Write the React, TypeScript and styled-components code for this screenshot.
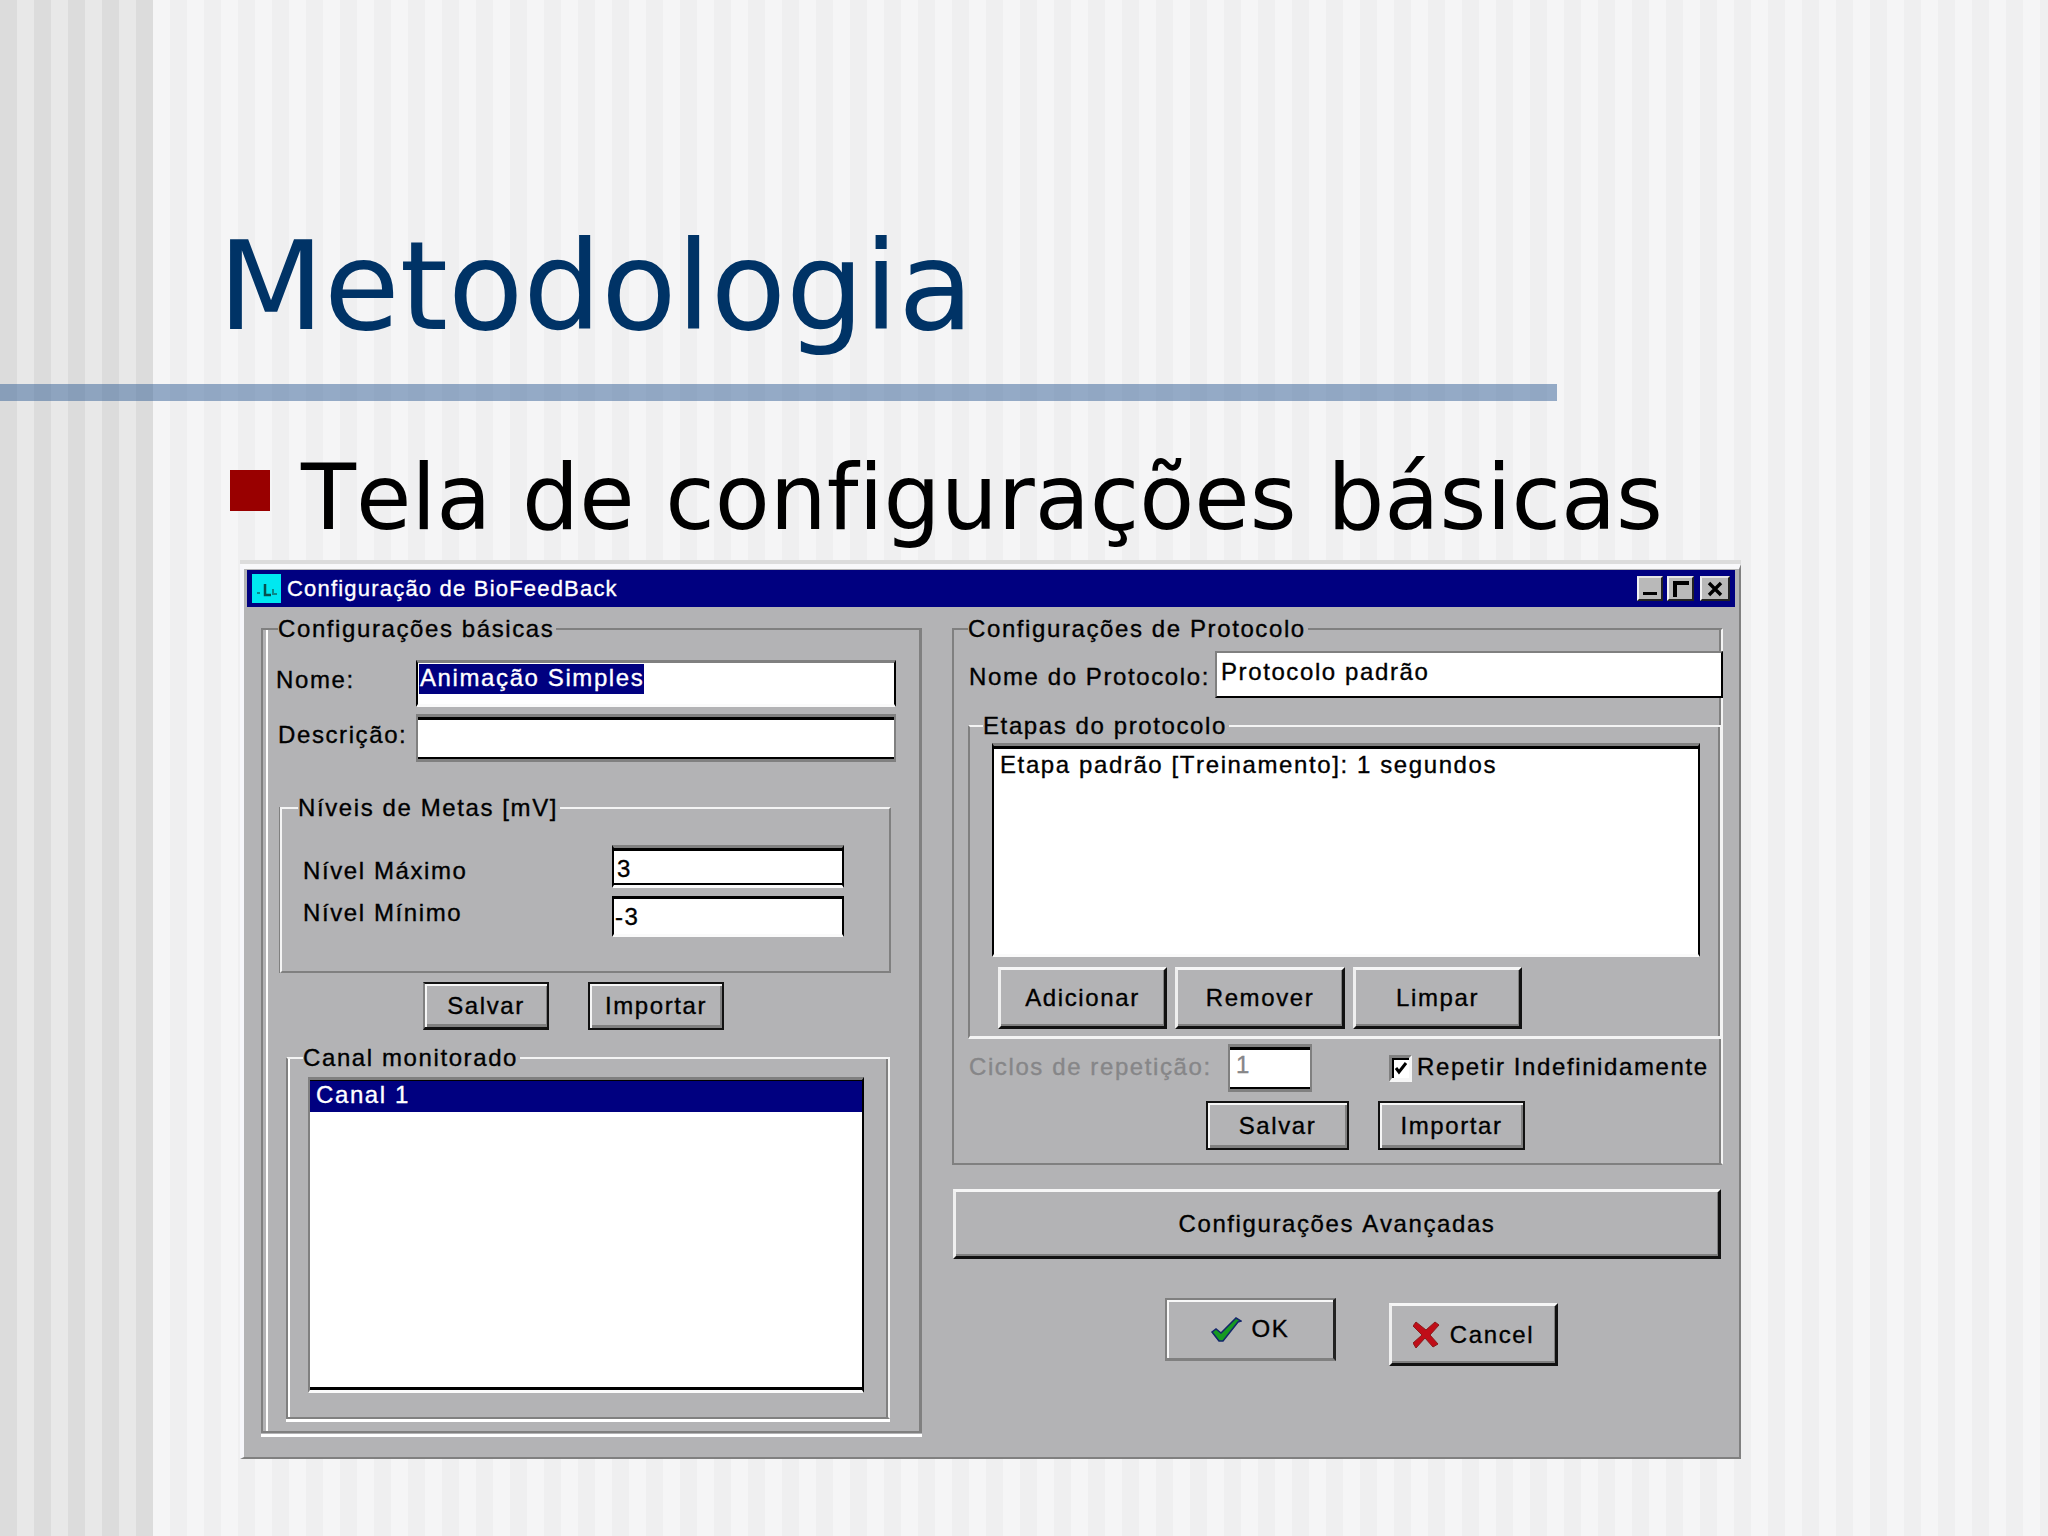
import React from 'react';
import styled, { createGlobalStyle, css } from 'styled-components';

const FACE = '#b3b3b5';
const SHADE = '#808080';
const NAVY = '#000080';

const GlobalStyle = createGlobalStyle`
    html, body {
        margin: 0;
        padding: 0;
    }
`;

const Page = styled.div`
    width: 2048px;
    height: 1536px;
    box-sizing: border-box;
    padding-top: 222px;
    overflow: hidden;
    font-family: 'DejaVu Sans', sans-serif;
    font-kerning: none;
    font-variant-ligatures: none;
    background-image:
        repeating-linear-gradient(90deg, #dcdcdc 0 17px, #e8e8e8 17px 34px),
        repeating-linear-gradient(90deg, #f5f5f6 0 17px, #efeff0 17px 34px);
    background-size: 153px 100%, 100% 100%;
    background-position: 0 0, 153px 0;
    background-repeat: no-repeat, no-repeat;
`;

const Title = styled.h1`
    margin: 0 0 0 218px;
    font-size: 123px;
    line-height: 130px;
    font-weight: 400;
    color: #003366;
`;

const Rule = styled.div`
    width: 1557px;
    height: 17px;
    margin-top: 32px;
    background: rgba(51, 95, 150, 0.5);
`;

const Heading = styled.div`
    display: flex;
    align-items: flex-start;
    gap: 31px;
    margin: 47px 0 0 230px;
    height: 100px;
`;

const Bullet = styled.span`
    flex: none;
    width: 40px;
    height: 41px;
    margin-top: 22px;
    background: #990000;
`;

const HeadingText = styled.div`
    font-size: 90px;
    line-height: 100px;
    word-spacing: 2px;
    color: #000;
`;

const Dialog = styled.div`
    width: 1501px;
    height: 895px;
    box-sizing: border-box;
    margin: 16px 0 0 240px;
    padding-top: 1px;
    border-top: 5px solid #f8f8fa;
    border-left: 4px solid #f6f6fa;
    border-right: 2px solid ${SHADE};
    border-bottom: 2px solid ${SHADE};
    box-shadow: 0 -4px #dcdcdc;
    background: ${FACE};
    color: #000;
    font-family: 'Liberation Sans', Arial, sans-serif;
    font-size: 24px;
    line-height: 28px;
    letter-spacing: 1.6px;
    -webkit-text-stroke: 0.35px currentColor;
`;

const TitleBar = styled.div`
    display: flex;
    align-items: center;
    height: 37px;
    margin: 0 4px 0 3px;
    padding: 0 5px;
    background: ${NAVY};
    color: #fff;
    font-size: 22px;
    letter-spacing: 1.2px;
`;

const TitleText = styled.span`
    flex: 1;
    margin-left: 6px;
`;

const AppIcon = styled.svg`
    width: 29px;
    height: 29px;
    flex: none;
`;

const WindowButton = styled.button<{ $width: number; $gap: number }>`
    display: flex;
    align-items: center;
    justify-content: center;
    width: ${(p) => p.$width}px;
    height: 25px;
    margin-left: ${(p) => p.$gap}px;
    padding: 0;
    box-sizing: border-box;
    border: 0;
    border-top: 2px solid #e4e4e4;
    border-left: 2px solid #f2f2f2;
    border-right: 2px solid #222;
    border-bottom: 2px solid #222;
    background: #b9b9b9;
`;

const Columns = styled.div`
    display: grid;
    grid-template-columns: 661px 771px;
    column-gap: 30px;
    padding: 8px 0 0 17px;
`;

const Column = styled.div`
    display: flex;
    flex-direction: column;
    align-items: flex-start;
`;

const Group = styled.fieldset`
    box-sizing: border-box;
    min-width: 0;
    margin: 0;
    padding: 0;
    border: 2px solid ${SHADE};
`;

const BasicGroup = styled(Group)`
    width: 661px;
    height: 818px;
    border-right-width: 3px;
    box-shadow: inset 3px 0 ${FACE}, inset 5px 0 #fff, 0 1px ${FACE}, 0 4px #fff;
`;

const GoalsGroup = styled(Group)`
    width: 611px;
    height: 179px;
    margin: 32px 0 0 17px;
    border-top-color: #f4f4f4;
    border-left-color: #f4f4f4;
    box-shadow: -1px 0 ${SHADE};
`;

const ChannelGroup = styled(Group)`
    width: 604px;
    height: 375px;
    margin: 14px 0 0 23px;
    border-top-color: #f4f4f4;
    border-right-color: #f4f4f4;
    box-shadow: inset 2px 0 #fff, inset -2px 0 ${SHADE}, 0 3px #fff;
`;

const ProtocolGroup = styled(Group)`
    width: 771px;
    height: 550px;
    border-right-color: #f4f4f4;
    box-shadow: inset -2px 0 ${SHADE};
`;

const StepsGroup = styled(Group)`
    width: 754px;
    height: 327px;
    margin: 14px 0 0 14px;
    border-top-color: #f4f4f4;
    border-bottom-color: #f4f4f4;
    border-bottom-width: 3px;
    border-right-color: #f4f4f4;
    box-shadow: inset -2px 0 ${SHADE};
`;

const Legend = styled.legend<{ $inset: number }>`
    height: 28px;
    margin-left: ${(p) => p.$inset}px;
    padding: 0 2px 0 0;
`;

const Row = styled.div<{ $columns: string; $top: number; $left: number }>`
    display: grid;
    grid-template-columns: ${(p) => p.$columns};
    align-items: start;
    margin-top: ${(p) => p.$top}px;
    padding-left: ${(p) => p.$left}px;
`;

const FieldLabel = styled.span<{ $top: number; $muted?: boolean }>`
    margin-top: ${(p) => p.$top}px;
    white-space: nowrap;
    color: ${(p) => (p.$muted ? '#868688' : 'inherit')};
`;

const wellEdges = {
    name: css`
        border-style: solid;
        border-width: 3px 2px;
        border-color: ${SHADE} #000 #fafafa #000;
    `,
    plain: css`
        border-style: solid;
        border-width: 3px 2px;
        border-color: ${SHADE};
        box-shadow: inset 0 3px #000, inset 0 -2px #000;
    `,
    boxed: css`
        border-style: solid;
        border-width: 3px 2px 3px;
        border-color: ${SHADE} #000 #fafafa #000;
        box-shadow: inset 0 3px #000, inset 0 -2px #000;
    `,
    open: css`
        border-style: solid;
        border-width: 3px 2px;
        border-color: #000 #000 #fafafa #000;
    `,
    entry: css`
        border-style: solid;
        border-width: 2px;
        border-color: ${SHADE} #000 #000 ${SHADE};
    `,
    list: css`
        border-style: solid;
        border-width: 3px 2px;
        border-color: ${SHADE} #000 #fafafa ${SHADE};
        box-shadow: inset 0 2px #000, inset 0 -3px #000;
    `,
    steps: css`
        border-style: solid;
        border-width: 3px 2px;
        border-color: ${SHADE} #000 #fafafa #000;
        box-shadow: inset 0 3px #000;
    `,
};

const Well = styled.div<{ $edge: keyof typeof wellEdges; $width: number; $height: number; $pad?: string; $muted?: boolean }>`
    box-sizing: border-box;
    width: ${(p) => p.$width}px;
    height: ${(p) => p.$height}px;
    padding: ${(p) => p.$pad || '0'};
    background: #fff;
    white-space: nowrap;
    color: ${(p) => (p.$muted ? '#868688' : '#000')};
    ${(p) => wellEdges[p.$edge]};
`;

const Selection = styled.span`
    display: inline-block;
    height: 30px;
    padding-left: 1px;
    background: ${NAVY};
    color: #fff;
`;

const ChannelList = styled(Well)`
    margin: 5px 0 0 20px;
`;

const StepsList = styled(Well)`
    margin: 3px 0 0 22px;
`;

const ListRow = styled.div`
    height: 31px;
    margin-top: 1px;
    padding-left: 6px;
    background: ${NAVY};
    color: #fff;
`;

const ButtonRow = styled.div<{ $top: number; $left: number; $gap: number }>`
    display: flex;
    align-items: flex-start;
    gap: ${(p) => p.$gap}px;
    margin: ${(p) => p.$top}px 0 0 ${(p) => p.$left}px;
`;

const buttonEdges = {
    raised: css`
        border-style: solid;
        border-width: 3px;
        border-color: #f6f6f6 #111 #111 #f0f0f0;
        box-shadow: inset -1px -2px ${SHADE};
    `,
    framed: css`
        border: 2px solid #111;
        box-shadow: inset 2px 2px #f6f6f6, inset -2px -3px ${SHADE};
    `,
    topFramed: css`
        border-style: solid;
        border-width: 2px 2px 3px 2px;
        border-color: #111 #111 #111 ${SHADE};
        box-shadow: inset 2px 2px #f6f6f6, inset -1px -3px ${SHADE};
    `,
    pressed: css`
        border-style: solid;
        border-width: 2px 3px 3px 2px;
        border-color: ${SHADE} #222 ${SHADE} ${SHADE};
        box-shadow: inset 2px 2px #f8f8f8;
    `,
};

const Button = styled.button<{ $edge: keyof typeof buttonEdges; $width: number; $height: number }>`
    display: flex;
    align-items: center;
    justify-content: center;
    gap: 10px;
    box-sizing: border-box;
    width: ${(p) => p.$width}px;
    height: ${(p) => p.$height}px;
    padding: 0;
    background: ${FACE};
    color: #000;
    font: inherit;
    letter-spacing: inherit;
    ${(p) => buttonEdges[p.$edge]};
`;

const CancelButton = styled(Button)`
    margin-top: 5px;
`;

const RepeatRow = styled.div`
    display: flex;
    align-items: flex-start;
    margin-top: 5px;
    padding-left: 15px;
`;

const CycleLabel = styled(FieldLabel)`
    width: 259px;
`;

const Check = styled.span`
    display: flex;
    align-items: center;
    justify-content: center;
    box-sizing: border-box;
    width: 23px;
    height: 27px;
    margin: 11px 5px 0 77px;
    border-style: solid;
    border-width: 3px 3px 4px;
    border-color: ${SHADE} #f6f6f6 #f6f6f6 ${SHADE};
    background: #fff;
    box-shadow: inset 2px 2px #000;
`;

const CheckText = styled.span`
    margin-top: 9px;
    white-space: nowrap;
`;

function App(): React.ReactElement {
    return (
        <Page>
            <GlobalStyle />
            <Title>Metodologia</Title>
            <Rule />
            <Heading>
                <Bullet />
                <HeadingText>Tela de configurações básicas</HeadingText>
            </Heading>
            <Dialog>
                <TitleBar>
                    <AppIcon viewBox="0 0 29 29">
                        <rect width="29" height="29" fill="#00e8f0" />
                        <path d="M13 10v11h6" fill="none" stroke="#06504f" strokeWidth="2.5" />
                        <path d="M5 19h3M21 15v5h4" fill="none" stroke="#0b8a8a" strokeWidth="2" />
                    </AppIcon>
                    <TitleText>Configuração de BioFeedBack</TitleText>
                    <WindowButton $width={26} $gap={0} aria-label="Minimizar">
                        <svg width="14" height="14" viewBox="0 0 14 14">
                            <rect x="0" y="10" width="14" height="3" fill="#000" />
                        </svg>
                    </WindowButton>
                    <WindowButton $width={27} $gap={4} aria-label="Maximizar">
                        <svg width="18" height="18" viewBox="0 0 18 18">
                            <path d="M1 17V1h16v4H5v12z" fill="#000" />
                        </svg>
                    </WindowButton>
                    <WindowButton $width={30} $gap={6} aria-label="Fechar">
                        <svg width="16" height="16" viewBox="0 0 16 16">
                            <path d="M2 2l12 12M14 2L2 14" stroke="#000" strokeWidth="3.4" />
                        </svg>
                    </WindowButton>
                </TitleBar>
                <Columns>
                    <Column>
                        <BasicGroup>
                            <Legend $inset={15}>Configurações básicas</Legend>
                            <Row $columns="140px 480px" $top={17} $left={13}>
                                <FieldLabel $top={6}>Nome:</FieldLabel>
                                <Well $edge="name" $width={480} $height={47} $pad="1px 0 0 1px">
                                    <Selection>Animação Simples</Selection>
                                </Well>
                            </Row>
                            <Row $columns="138px 480px" $top={7} $left={15}>
                                <FieldLabel $top={7}>Descrição:</FieldLabel>
                                <Well $edge="plain" $width={480} $height={48} />
                            </Row>
                            <GoalsGroup>
                                <Legend $inset={16}>Níveis de Metas [mV]</Legend>
                                <Row $columns="309px 232px" $top={23} $left={21}>
                                    <FieldLabel $top={12}>Nível Máximo</FieldLabel>
                                    <Well $edge="boxed" $width={232} $height={43} $pad="7px 0 0 3px">3</Well>
                                </Row>
                                <Row $columns="309px 232px" $top={8} $left={21}>
                                    <FieldLabel $top={3}>Nível Mínimo</FieldLabel>
                                    <Well $edge="open" $width={232} $height={41} $pad="4px 0 0 1px">-3</Well>
                                </Row>
                            </GoalsGroup>
                            <ButtonRow $top={9} $left={160} $gap={39}>
                                <Button $edge="topFramed" $width={126} $height={48}>Salvar</Button>
                                <Button $edge="framed" $width={136} $height={48}>Importar</Button>
                            </ButtonRow>
                            <ChannelGroup>
                                <Legend $inset={15}>Canal monitorado</Legend>
                                <ChannelList $edge="list" $width={556} $height={316}>
                                    <ListRow>Canal 1</ListRow>
                                </ChannelList>
                            </ChannelGroup>
                        </BasicGroup>
                    </Column>
                    <Column>
                        <ProtocolGroup>
                            <Legend $inset={14}>Configurações de Protocolo</Legend>
                            <Row $columns="246px 508px" $top={8} $left={15}>
                                <FieldLabel $top={12}>Nome do Protocolo:</FieldLabel>
                                <Well $edge="entry" $width={508} $height={47} $pad="5px 0 0 4px">Protocolo padrão</Well>
                            </Row>
                            <StepsGroup>
                                <Legend $inset={13}>Etapas do protocolo</Legend>
                                <StepsList $edge="steps" $width={708} $height={214} $pad="5px 0 0 6px">
                                    Etapa padrão [Treinamento]: 1 segundos
                                </StepsList>
                                <ButtonRow $top={10} $left={28} $gap={8}>
                                    <Button $edge="raised" $width={169} $height={62}>Adicionar</Button>
                                    <Button $edge="raised" $width={170} $height={62}>Remover</Button>
                                    <Button $edge="raised" $width={169} $height={62}>Limpar</Button>
                                </ButtonRow>
                            </StepsGroup>
                            <RepeatRow>
                                <CycleLabel $top={9} $muted>Ciclos de repetição:</CycleLabel>
                                <Well $edge="plain" $width={84} $height={48} $pad="4px 0 0 6px" $muted>1</Well>
                                <Check>
                                    <svg width="14" height="14" viewBox="0 0 14 14">
                                        <path d="M2 7l3 4 7-9" fill="none" stroke="#000" strokeWidth="3" />
                                    </svg>
                                </Check>
                                <CheckText>Repetir Indefinidamente</CheckText>
                            </RepeatRow>
                            <ButtonRow $top={9} $left={252} $gap={29}>
                                <Button $edge="framed" $width={143} $height={49}>Salvar</Button>
                                <Button $edge="framed" $width={147} $height={49}>Importar</Button>
                            </ButtonRow>
                        </ProtocolGroup>
                        <ButtonRow $top={24} $left={1} $gap={0}>
                            <Button $edge="raised" $width={768} $height={70}>Configurações Avançadas</Button>
                        </ButtonRow>
                        <ButtonRow $top={39} $left={213} $gap={53}>
                            <Button $edge="pressed" $width={171} $height={63}>
                                <svg width="31" height="25" viewBox="0 0 31 25">
                                    <path d="M1 15l4-3 5 4L25 1l5 3-3 1-15 19H8z" fill="#169a22" stroke="#12246a" strokeWidth="1.5" />
                                </svg>
                                OK
                            </Button>
                            <CancelButton $edge="raised" $width={169} $height={63}>
                                <svg width="27" height="27" viewBox="0 0 27 27">
                                    <path d="M3 1l10 8 9-8 4 3-9 10 8 9-5 3-8-9-9 10-3-5 9-8-9-9z" fill="#c00d18" stroke="#8a1a1a" strokeWidth="1" />
                                </svg>
                                Cancel
                            </CancelButton>
                        </ButtonRow>
                    </Column>
                </Columns>
            </Dialog>
        </Page>
    );
}

export default App;
